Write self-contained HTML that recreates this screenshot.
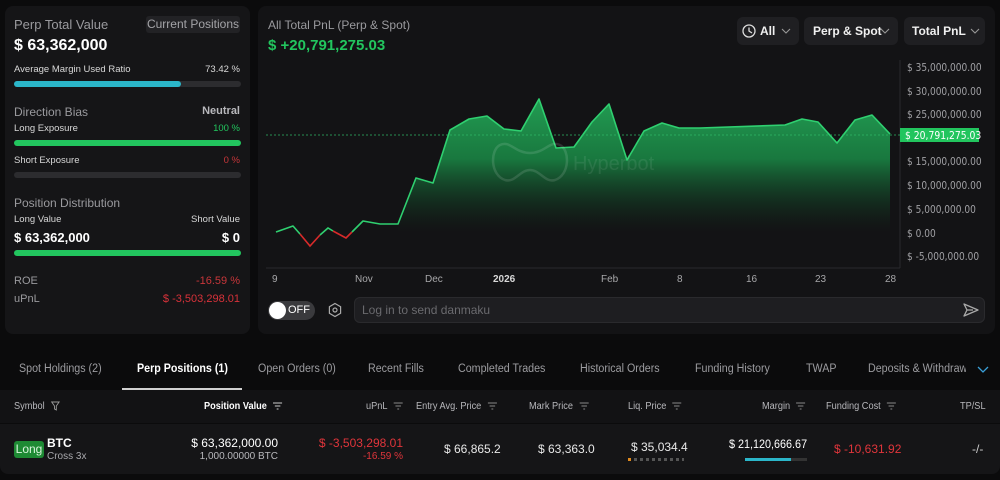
<!DOCTYPE html>
<html><head><meta charset="utf-8">
<style>
*{box-sizing:border-box;margin:0;padding:0}
body{width:1000px;height:480px;background:#0b0b0c;font-family:"Liberation Sans",sans-serif;color:#e8e8e8;position:relative;overflow:hidden}
div{white-space:nowrap}
.a{position:absolute;white-space:nowrap}
.card{position:absolute;background:#151517;border-radius:8px}
.g{color:#9a9a9e}
.bar{position:absolute;height:6px;border-radius:3px;background:#2c2c2f}
.btn{position:absolute;background:#1f1f22;border-radius:6px;font-weight:bold;font-size:12px;color:#f0f0f0;height:28px;line-height:28px;top:17px}
.yl{position:absolute;left:907px;font-size:11px;color:#a0a0a4;font-family:"DejaVu Sans",sans-serif;transform:scaleX(.82);transform-origin:left}
.xl{position:absolute;top:274px;font-size:10px;color:#a8a8aa}
.tab{position:absolute;top:363px;font-size:11.5px;color:#9c9ca0;transform:scaleX(.93);transform-origin:left}
.th{position:absolute;top:401px;font-size:10px;color:#b8b8bc;transform:scaleX(.92);transform-origin:left}
.td{position:absolute;font-size:12px;color:#e8e8e8}
.red{color:#e0353b}
.fl{display:inline-block;vertical-align:middle;margin-left:4px}
</style></head><body>

<div class="card" style="left:5px;top:6px;width:245px;height:328px"></div>
<div class="a g" style="left:14px;top:17px;font-size:13px">Perp Total Value</div>
<div class="a" style="left:146px;top:16px;width:94px;height:17px;background:#222225;border-radius:3px;font-size:12px;color:#a4a4a8;text-align:center;line-height:17px">Current Positions</div>
<div class="a" style="left:14px;top:37px;font-size:16px;font-weight:bold;color:#fff">$ 63,362,000</div>
<div class="a" style="left:14px;top:64px;font-size:9.5px;color:#d8d8d8">Average Margin Used Ratio</div>
<div class="a" style="right:760px;top:64px;font-size:9.5px;color:#d8d8d8">73.42 %</div>
<div class="bar" style="left:14px;top:81px;width:227px"></div>
<div class="bar" style="left:14px;top:81px;width:167px;background:#2bb6c9"></div>

<div class="a g" style="left:14px;top:105px;font-size:12px">Direction Bias</div>
<div class="a" style="right:760px;top:105px;font-size:11px;font-weight:bold;color:#b8b8bc">Neutral</div>
<div class="a" style="left:14px;top:123px;font-size:9.5px;color:#d8d8d8">Long Exposure</div>
<div class="a" style="right:760px;top:123px;font-size:9.5px;color:#22c55e">100 %</div>
<div class="bar" style="left:14px;top:140px;width:227px;background:#22c55e"></div>
<div class="a" style="left:14px;top:155px;font-size:9.5px;color:#d8d8d8">Short Exposure</div>
<div class="a" style="right:760px;top:155px;font-size:9.5px;color:#c8363a">0 %</div>
<div class="bar" style="left:14px;top:172px;width:227px"></div>

<div class="a g" style="left:14px;top:196px;font-size:12px">Position Distribution</div>
<div class="a" style="left:14px;top:214px;font-size:9.5px;color:#d8d8d8">Long Value</div>
<div class="a" style="right:760px;top:214px;font-size:9.5px;color:#d8d8d8">Short Value</div>
<div class="a" style="left:14px;top:230px;font-size:13px;font-weight:bold;color:#fff">$ 63,362,000</div>
<div class="a" style="right:760px;top:230px;font-size:13px;font-weight:bold;color:#fff">$ 0</div>
<div class="bar" style="left:14px;top:250px;width:227px;background:#22c55e"></div>
<div class="a g" style="left:14px;top:275px;font-size:11px">ROE</div>
<div class="a" style="right:760px;top:275px;font-size:11px;color:#c8363a">-16.59 %</div>
<div class="a g" style="left:14px;top:293px;font-size:11px">uPnL</div>
<div class="a" style="right:760px;top:293px;font-size:11px;color:#d8323a">$ -3,503,298.01</div>

<div class="card" style="left:258px;top:6px;width:737px;height:328px;background:#131315"></div>
<div class="a g" style="left:268px;top:18px;font-size:12px">All Total PnL (Perp &amp; Spot)</div>
<div class="a" style="left:268px;top:37px;font-size:15px;font-weight:bold;color:#22c55e">$ +20,791,275.03</div>

<div class="btn" style="left:737px;width:62px;padding-left:23px">All
<svg class="a" style="left:5px;top:7px" width="14" height="14" viewBox="0 0 14 14"><circle cx="7" cy="7" r="6" fill="none" stroke="#ddd" stroke-width="1.3"/><path d="M7 3.5V7l3 2" fill="none" stroke="#ddd" stroke-width="1.3"/></svg>
<svg class="a" style="left:44px;top:11px" width="10" height="6"><path d="M1 1l4 4 4-4" fill="none" stroke="#999" stroke-width="1.1"/></svg></div>
<div class="btn" style="left:804px;width:94px;padding-left:9px">Perp &amp; Spot
<svg class="a" style="left:76px;top:11px" width="10" height="6"><path d="M1 1l4 4 4-4" fill="none" stroke="#999" stroke-width="1.1"/></svg></div>
<div class="btn" style="left:904px;width:81px;padding-left:8px">Total PnL
<svg class="a" style="left:66px;top:11px" width="10" height="6"><path d="M1 1l4 4 4-4" fill="none" stroke="#999" stroke-width="1.1"/></svg></div>

<svg class="a" style="left:0;top:0" width="1000" height="340">
<defs>
<linearGradient id="fill" x1="0" y1="99" x2="0" y2="232" gradientUnits="userSpaceOnUse"><stop offset="0" stop-color="#23a456" stop-opacity=".95"/><stop offset=".45" stop-color="#1a8a46" stop-opacity=".85"/><stop offset="1" stop-color="#0f3a20" stop-opacity="0"/></linearGradient></defs>
<line x1="900" y1="60" x2="900" y2="268" stroke="#2a2a2d"/>
<line x1="266" y1="268" x2="900" y2="268" stroke="#2a2a2d"/>
<polygon fill="url(#fill)" points="398,232 398,224 416,178 433,183 450,130 469,119 487,116 504,129 521,131 539,99 556,148 574,147 592,122 609,104 627,160 644,131 662,123 679,128 700,128 785,125 802,119 818,122 837,143 855,120 872,115 890,134 890,232"/>
<polyline fill="none" stroke="#2fd070" stroke-width="1.6" stroke-linejoin="round" points="276,232 293,226 300,234"/>
<polyline fill="none" stroke="#d82a2a" stroke-width="1.6" points="300,234 310,246 320,235"/>
<polyline fill="none" stroke="#2fd070" stroke-width="1.6" points="320,235 328,228 333,231"/>
<polyline fill="none" stroke="#d82a2a" stroke-width="1.6" points="333,231 346,238 352,232"/>
<polyline fill="none" stroke="#2fd070" stroke-width="1.6" stroke-linejoin="round" points="352,232 363,221 380,224 398,224 416,178 433,183 450,130 469,119 487,116 504,129 521,131 539,99 556,148 574,147 592,122 609,104 627,160 644,131 662,123 679,128 700,128 785,125 802,119 818,122 837,143 855,120 872,115 890,134"/>
<line x1="266" y1="135" x2="900" y2="135" stroke="#2fb866" stroke-width="0.8" stroke-dasharray="2,2"/>
<rect x="900" y="128" width="79" height="14" fill="#22c55e"/>
<text x="905" y="139" font-size="11" fill="#fff" font-family="DejaVu Sans,sans-serif" transform="translate(905 0) scale(.84 1) translate(-905 0)">$ 20,791,275.03</text>
<g opacity=".12" fill="none" stroke="#fff" stroke-width="2.5">
<path d="M500 145c-10 5-10 30 5 35 10 3 15-10 25-10s15 13 25 10c15-5 15-30 5-35-10-5-15 8-30 8s-20-13-30-8z"/>
</g>
<text x="573" y="170" font-size="20" fill="#fff" opacity=".08" font-family="Liberation Sans">Hyperbot</text>
</svg>

<div class="yl" style="top:61px">$ 35,000,000.00</div>
<div class="yl" style="top:85px">$ 30,000,000.00</div>
<div class="yl" style="top:108px">$ 25,000,000.00</div>
<div class="yl" style="top:155px">$ 15,000,000.00</div>
<div class="yl" style="top:179px">$ 10,000,000.00</div>
<div class="yl" style="top:203px">$ 5,000,000.00</div>
<div class="yl" style="top:227px">$ 0.00</div>
<div class="yl" style="top:250px">$ -5,000,000.00</div>

<div class="xl" style="left:272px">9</div>
<div class="xl" style="left:355px">Nov</div>
<div class="xl" style="left:425px">Dec</div>
<div class="xl" style="left:493px;font-weight:bold;color:#d8d8d8">2026</div>
<div class="xl" style="left:601px">Feb</div>
<div class="xl" style="left:677px">8</div>
<div class="xl" style="left:746px">16</div>
<div class="xl" style="left:815px">23</div>
<div class="xl" style="left:885px">28</div>

<div class="a" style="left:268px;top:301px;width:47px;height:19px;border-radius:10px;background:#3a3a3d"></div>
<div class="a" style="left:269px;top:302px;width:17px;height:17px;border-radius:50%;background:#fff"></div>
<div class="a" style="left:288px;top:304px;font-size:11px;color:#fff">OFF</div>
<svg class="a" style="left:327px;top:302px" width="16" height="16" viewBox="0 0 16 16"><path d="M8 1.5l5.6 3.2v6.6L8 14.5 2.4 11.3V4.7z" fill="none" stroke="#aaa" stroke-width="1.2"/><circle cx="8" cy="8" r="2" fill="none" stroke="#aaa" stroke-width="1.2"/></svg>
<div class="a" style="left:354px;top:297px;width:631px;height:26px;border-radius:6px;background:#1e1e21;border:1px solid #2a2a2d"></div>
<div class="a" style="left:362px;top:303px;font-size:12px;color:#6a6a6e">Log in to send danmaku</div>
<svg class="a" style="left:962px;top:302px" width="18" height="16" viewBox="0 0 18 16"><path d="M2 2l14 6-14 6 3-6z M5 8h6" fill="none" stroke="#aaa" stroke-width="1.3" stroke-linejoin="round"/></svg>

<div class="tab" style="left:19px">Spot Holdings (2)</div>
<div class="tab" style="left:137px;color:#fff;font-weight:bold">Perp Positions (1)</div>
<div class="a" style="left:122px;top:388px;width:120px;height:2px;background:#d0d0d0"></div>
<div class="tab" style="left:258px">Open Orders (0)</div>
<div class="tab" style="left:368px">Recent Fills</div>
<div class="tab" style="left:458px">Completed Trades</div>
<div class="tab" style="left:580px">Historical Orders</div>
<div class="tab" style="left:695px">Funding History</div>
<div class="tab" style="left:806px">TWAP</div>
<div class="a" style="left:868px;top:360px;width:98px;height:20px;overflow:hidden"><div class="tab" style="left:0;top:3px">Deposits &amp; Withdrawals</div></div>
<svg class="a" style="left:977px;top:366px" width="12" height="8"><path d="M1 1l5 5 5-5" fill="none" stroke="#3aa0d8" stroke-width="1.3"/></svg>

<div class="a" style="left:0;top:390px;width:1000px;height:33px;background:#121214"></div>
<div class="th" style="left:14px">Symbol <svg class="fl" width="10" height="10"><path d="M1 1h8L6 5v4L4 8V5z" fill="none" stroke="#999"/></svg></div>
<div class="th" style="left:204px;color:#fff;font-weight:bold">Position Value <svg class="fl" width="10" height="8"><path d="M0 1h10M2 4h6M4 7h2" stroke="#ccc"/></svg></div>
<div class="th" style="left:366px">uPnL <svg class="fl" width="10" height="8"><path d="M0 1h10M2 4h6M4 7h2" stroke="#888"/></svg></div>
<div class="th" style="left:416px">Entry Avg. Price <svg class="fl" width="10" height="8"><path d="M0 1h10M2 4h6M4 7h2" stroke="#888"/></svg></div>
<div class="th" style="left:529px">Mark Price <svg class="fl" width="10" height="8"><path d="M0 1h10M2 4h6M4 7h2" stroke="#888"/></svg></div>
<div class="th" style="left:628px">Liq. Price <svg class="fl" width="10" height="8"><path d="M0 1h10M2 4h6M4 7h2" stroke="#888"/></svg></div>
<div class="th" style="left:762px">Margin <svg class="fl" width="10" height="8"><path d="M0 1h10M2 4h6M4 7h2" stroke="#888"/></svg></div>
<div class="th" style="left:826px">Funding Cost <svg class="fl" width="10" height="8"><path d="M0 1h10M2 4h6M4 7h2" stroke="#888"/></svg></div>
<div class="th" style="left:960px">TP/SL</div>

<div class="card" style="left:0;top:424px;width:1000px;height:50px;border-radius:0 0 8px 8px"></div>
<div class="a" style="left:14px;top:441px;width:30px;height:17px;background:#1e8a34;border-radius:3px;font-size:12px;color:#d8f5dc;text-align:center;line-height:17px">Long</div>
<div class="td" style="left:47px;top:436px;font-weight:bold;color:#fff">BTC</div>
<div class="td" style="left:47px;top:451px;font-size:10px;color:#a8a8ac">Cross 3x</div>
<div class="td" style="right:722px;top:436px;color:#fff">$ 63,362,000.00</div>
<div class="td" style="right:722px;top:451px;font-size:10px;color:#b8b8bc">1,000.00000 BTC</div>
<div class="td red" style="right:597px;top:436px">$ -3,503,298.01</div>
<div class="td red" style="right:597px;top:451px;font-size:10px">-16.59 %</div>
<div class="td" style="left:444px;top:442px">$ 66,865.2</div>
<div class="td" style="left:538px;top:442px">$ 63,363.0</div>
<div class="td" style="left:631px;top:440px">$ 35,034.4</div>
<div class="a" style="left:628px;top:458px;width:56px;height:3px;background:repeating-linear-gradient(90deg,#555 0 3px,transparent 3px 6px)"></div>
<div class="a" style="left:628px;top:458px;width:6px;height:3px;background:repeating-linear-gradient(90deg,#e08a1e 0 3px,transparent 3px 6px)"></div>
<div class="td" style="left:729px;top:437px;color:#fff;transform:scaleX(.9);transform-origin:left">$ 21,120,666.67</div>
<div class="a" style="left:745px;top:458px;width:62px;height:3px;background:#333"></div>
<div class="a" style="left:745px;top:458px;width:46px;height:3px;background:#2bb6c9"></div>
<div class="td red" style="left:834px;top:442px">$ -10,631.92</div>
<div class="td" style="left:972px;top:442px;color:#ccc">-/-</div>
</body></html>
